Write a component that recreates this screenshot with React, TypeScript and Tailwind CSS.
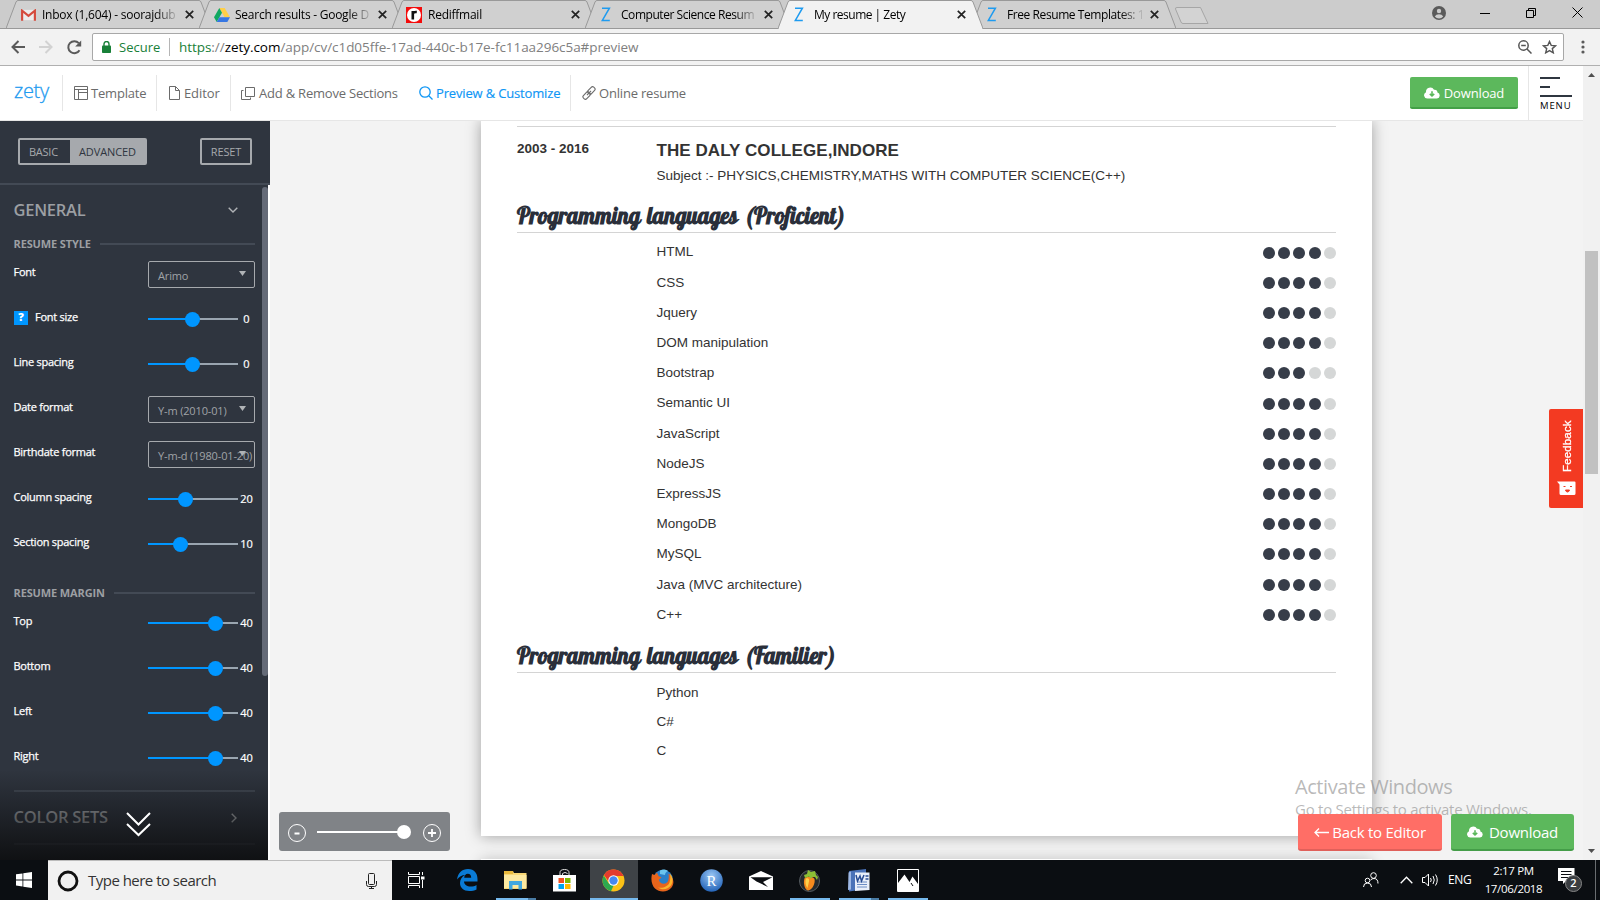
import React from "react";

const UI = "font-['Open_Sans','Noto_Sans',sans-serif]";

const ZIcon = () => (
  <svg width="10" height="15" viewBox="0 0 10 15" fill="none" stroke="#1e9bf0" strokeWidth="1.5" className="ml-px">
    <path d="M1 1.2h7.4L1.2 13.6h7.6" />
  </svg>
);
const GmailIcon = () => (
  <svg width="15" height="12" viewBox="0 0 16 12">
    <rect x="1" y="0.5" width="14" height="11" fill="#ececec" />
    <path d="M1.2 12V1.4L8 6.8l6.800-5.4V12" fill="none" stroke="#d54b3d" strokeWidth="2.300" />
  </svg>
);
const DriveIcon = () => (
  <svg width="16" height="14" viewBox="0 0 16 14">
    <path d="M5.300 0h5.400L16 9.300h-5.400z" fill="#ffcf48" />
    <path d="M5.300 0L8 4.700 2.700 14 0 9.300z" fill="#11a861" />
    <path d="M5.400 9.300H16L13.300 14H2.700z" fill="#3777e3" />
  </svg>
);
const RediffIcon = () => (
  <svg width="16" height="16" viewBox="0 0 16 16" className="-ml-px">
    <rect width="16" height="16" fill="#f40b0b" />
    <circle cx="8" cy="8" r="7" fill="#fff" />
    <path d="M6.800 12.500V4M6.800 7.500c0-2.200 1.500-2.700 4-2.500" fill="none" stroke="#111" strokeWidth="2.600" />
  </svg>
);

function Tab({ icon, title, track, active = false }: { icon: React.ReactNode; title: string; track: string; active?: boolean }) {
  const face = active ? "#f2f2f2" : "#d0d0d0";
  return (
    <div className={`relative h-[29px] w-[205px] -mr-[12px] shrink-0 ${active ? "z-10" : ""}`}>
      <svg className="absolute inset-0" width="205" height="29" viewBox="0 0 205 29">
        <path d="M0 28.500L10 2Q10.800 .5 12 .5H193Q194.200 .5 195 2L205 28.500" fill={face} stroke="#999" />
        {active ? <path d="M1 28.500H204" stroke="#f2f2f2" /> : <path d="M0 28.500H205" stroke="#999" />}
      </svg>
      <div className="relative flex h-[29px] items-center pl-[15px] pr-[17px]">
        <span className="flex w-[21px] shrink-0">{icon}</span>
        <span className={`h-[18px] w-[138px] whitespace-nowrap text-[12px] leading-[18px] text-black ${track} [mask-image:linear-gradient(to_right,black_82%,transparent_100%)]`}>
          {title}
        </span>
        <svg className="ml-auto" width="9" height="9" viewBox="0 0 9 9" stroke="#222" strokeWidth="1.700">
          <path d="M.8 .8l7.400 7.400M8.200 .8L.8 8.200" />
        </svg>
      </div>
    </div>
  );
}

function BrowserChrome() {
  return (
    <div className="shrink-0">
      <div className="flex h-[29px] border-b border-[#999] bg-[#ccc] pl-[6px]">
        <Tab icon={<GmailIcon />} title="Inbox (1,604) - soorajdub" track="tracking-[-0.23px]" />
        <Tab icon={<DriveIcon />} title="Search results - Google D" track="tracking-[-0.25px]" />
        <Tab icon={<RediffIcon />} title="Rediffmail" track="tracking-[-0.25px]" />
        <Tab icon={<ZIcon />} title="Computer Science Resum" track="tracking-[-0.45px]" />
        <Tab icon={<ZIcon />} title="My resume | Zety" track="tracking-[-0.5px]" active />
        <Tab icon={<ZIcon />} title="Free Resume Templates: 1" track="tracking-[-0.42px]" />
        <svg className="ml-[10px] mt-[6px]" width="36" height="19" viewBox="0 0 36 19">
          <path d="M3 1.500H26.500L34 17.500H9Q7.500 17.500 7 16L1.500 3Q1.200 1.500 3 1.500z" fill="#d3d3d3" stroke="#a6a6a6" />
        </svg>
        <div className="ml-auto flex items-center">
          <svg width="14" height="14" viewBox="0 0 14 14" className="-mt-[3px] mr-[34px]">
            <circle cx="7" cy="7" r="7" fill="#5a5a5a" />
            <circle cx="7" cy="5" r="2.200" fill="#ccc" />
            <path d="M2.800 10.500Q4 8.200 7 8.200T11.200 10.500Q9.500 12.500 7 12.500T2.800 10.500z" fill="#ccc" />
          </svg>
          <svg width="10" height="10" viewBox="0 0 10 10" stroke="#000" className="mr-[36px]"><path d="M0 4.500h10" /></svg>
          <svg width="10" height="10" viewBox="0 0 10 10" stroke="#000" fill="none" className="-mt-[3px] mr-[36px]">
            <path d="M.5 2.500h7v7h-7zM2.500 2V.5h7v7H8" />
          </svg>
          <svg width="11" height="11" viewBox="0 0 11 11" stroke="#000" className="-mt-[3px] mr-[17px]"><path d="M.5 .5l10 10M10.500 .5l-10 10" /></svg>
        </div>
      </div>
      <div className="flex h-[37px] items-center border-b border-[#b0b0b0] bg-[#f2f2f2] pl-[11px]">
        <svg width="14" height="14" viewBox="0 0 14 14" fill="none" stroke="#5a5a5a" strokeWidth="2"><path d="M14 7H1.500M7.500 1L1.500 7l6 6" /></svg>
        <svg className="ml-[14px]" width="14" height="14" viewBox="0 0 14 14" fill="none" stroke="#d2d2d2" strokeWidth="2"><path d="M0 7h12.500M6.500 1l6 6-6 6" /></svg>
        <svg className="ml-[14px]" width="15" height="15" viewBox="0 0 15 15" fill="none" stroke="#5a5a5a" strokeWidth="2">
          <path d="M12.500 10.200A6 6 0 1 1 11.800 3.200" />
          <path d="M14.200 .5v6h-6z" fill="#5a5a5a" stroke="none" />
        </svg>
        <div className="ml-[10px] flex h-[28px] w-[1472px] items-center rounded-[2px] border border-[#a8a8a8] bg-white text-[13px]">
          <svg className="ml-[9px]" width="9" height="12" viewBox="0 0 9 12">
            <rect y="4.500" width="9" height="7.500" rx="0.800" fill="#188038" />
            <path d="M2 5V3a2.500 2.500 0 0 1 5 0v2" fill="none" stroke="#188038" strokeWidth="1.400" />
          </svg>
          <span className="ml-[8px] mt-px w-[42px] whitespace-nowrap text-[13px] text-[#188038]">Secure</span>
          <span className="ml-[8px] h-[18px] w-px bg-[#b5b5b5]" />
          <span className="ml-[9px] mt-px whitespace-nowrap text-[13.500px] tracking-[-0.050px] text-[#808080]">
            <span className="text-[#188038]">https</span>://<span className="text-black">zety.com</span>/app/cv/c1d05ffe-17ad-440c-b17e-fc11aa296c5a#preview
          </span>
          <svg className="ml-auto" width="14" height="14" viewBox="0 0 14 14" fill="none" stroke="#555" strokeWidth="1.500">
            <circle cx="5.500" cy="5.500" r="4.700" />
            <path d="M9 9l4.500 4.500M3.200 5.500h4.600" />
          </svg>
          <svg className="ml-[10px] mr-[6px]" width="15" height="14" viewBox="0 0 15 14" fill="none" stroke="#555" strokeWidth="1.400">
            <path d="M7.500 1.500l1.700 3.900 4.300.4-3.200 2.800 1 4.200-3.800-2.200-3.800 2.200 1-4.200L1.500 5.800l4.300-.4z" />
          </svg>
        </div>
        <svg className="ml-[17px]" width="4" height="14" viewBox="0 0 4 14" fill="#5a5a5a">
          <circle cx="2" cy="2" r="1.600" /><circle cx="2" cy="7" r="1.600" /><circle cx="2" cy="12" r="1.600" />
        </svg>
      </div>
    </div>
  );
}

const CloudDown = ({ hole }: { hole: string }) => (
  <svg width="16" height="12" viewBox="0 0 16 12">
    <path d="M3.500 11.500A3.300 3.300 0 0 1 2 5.200 4.300 4.300 0 0 1 10 2.800a2.600 2.600 0 0 1 3.400 2.800A3 3 0 0 1 13 11.500z" fill="#fff" />
    <path d="M8 4.300v4.500M5.800 6.900L8 9l2.200-2.100" fill="none" stroke={hole} strokeWidth="1.600" />
  </svg>
);

const Sep = () => <span className="h-[36px] w-px shrink-0 bg-[#e6e6e6]" />;

function AppHeader() {
  return (
    <div className="flex h-[55px] shrink-0 items-center border-b border-[#e6e6e6] bg-white text-[13px] text-[#6b6b6b]">
      <span className="ml-[14px] w-[48px] -mt-[5px] text-[20px] font-light tracking-[-0.3px] text-[#1e9bf0] [-webkit-text-stroke:0.300px_#1e9bf0]">zety</span>
      <Sep />
      <div className="flex w-[93px] items-center pl-[11px]">
        <svg width="14" height="14" viewBox="0 0 14 14" fill="none" stroke="#6b6b6b"><path d="M.5 .5h13v13H.5zM.5 3.500h13M4.500 3.500v10M4.500 6.500h9" /></svg>
        <span className="ml-[3px] mt-[2px] tracking-[-0.2px]">Template</span>
      </div>
      <Sep />
      <div className="flex w-[73px] items-center pl-[12px]">
        <svg width="11" height="14" viewBox="0 0 11 14" fill="none" stroke="#6b6b6b"><path d="M.5 .5h6l4 4v9H.5zM6.500 .5v4h4" /></svg>
        <span className="ml-[4px] mt-[2px] tracking-[-0.1px]">Editor</span>
      </div>
      <Sep />
      <div className="flex w-[188px] items-center pl-[10px]">
        <svg width="14" height="13" viewBox="0 0 14 13" fill="none" stroke="#6b6b6b"><path d="M4.500 .5h9v9h-9zM2.500 3.500h-2v9h9v-2" /></svg>
        <span className="ml-[4px] mt-[2px] whitespace-nowrap tracking-[-0.210px]">Add &amp; Remove Sections</span>
      </div>
      <div className="flex w-[151px] items-center text-[#0e96f5]">
        <svg width="14" height="14" viewBox="0 0 14 14" fill="none" stroke="#0e96f5" strokeWidth="1.300"><circle cx="6" cy="6" r="5.200" /><path d="M10 10l3.500 3.500" /></svg>
        <span className="ml-[3px] mt-[2px] whitespace-nowrap tracking-[-0.160px] [-webkit-text-stroke:0.150px_#0e96f5]">Preview &amp; Customize</span>
      </div>
      <Sep />
      <div className="flex items-center pl-[11px]">
        <svg width="14" height="14" viewBox="0 0 14 14" fill="none" stroke="#6b6b6b" strokeWidth="1.100">
          <g transform="rotate(-47 7 7)"><rect x="-0.500" y="4.700" width="8" height="4.600" rx="1.800" /><rect x="6.500" y="4.700" width="8" height="4.600" rx="1.800" /><path d="M4 7h6" /></g>
        </svg>
        <span className="ml-[3px] mt-[2px] whitespace-nowrap tracking-[-0.190px]">Online resume</span>
      </div>
      <div className="ml-auto flex h-[32px] w-[108px] items-center justify-center rounded-[2px] border-b-2 border-[#43a047] bg-[#5cb85c] pt-[2px] text-white">
        <CloudDown hole="#5cb85c" />
        <span className="ml-[4px] mt-px tracking-[-0.150px]">Download</span>
      </div>
      <div className="ml-[10px] flex h-full w-[55px] flex-col border-l border-[#e6e6e6] pl-[11px] pt-[11px]">
        <span className="h-[2px] w-[20px] bg-[#2f3640]" />
        <span className="mt-[7px] h-[2px] w-[10px] bg-[#2f3640]" />
        <span className="mt-[7px] h-[2px] w-[32px] bg-[#2f3640]" />
        <span className="mt-[3px] text-[9.500px] leading-[12px] tracking-[0.900px] text-black">MENU</span>
      </div>
    </div>
  );
}

function Slider({ pct, value }: { pct: number; value: number }) {
  return (
    <div className="ml-auto flex w-[107px] items-center pt-[2px]">
      <div className="relative h-[2px] w-[90px] bg-[#9aa5b0]">
        <div className="h-full bg-[#0096ff]" style={{ width: pct }} />
        <div className="absolute top-[-6px] size-[15px] rounded-full bg-[#0096ff]" style={{ left: pct - 7.5 }} />
      </div>
      <span className="w-[17px] text-center text-[11px] leading-[14px] text-white [-webkit-text-stroke:0.200px_white]">{value}</span>
    </div>
  );
}

function Select({ value }: { value: string }) {
  return (
    <div className="relative ml-auto mt-[3px] flex h-[27px] w-[107px] items-center rounded-[2px] border border-[#a6a9ad] pl-[9px] pt-[4px] text-[11px] tracking-[-0.150px] text-[#a0a3a7]">
      <span className="whitespace-nowrap">{value}</span>
      <svg className="absolute right-[8px] top-[9px]" width="7" height="5" viewBox="0 0 7 5" fill="#b0b3b6"><path d="M0 0h7L3.500 5z" /></svg>
    </div>
  );
}

function Row({ label, help = false, children }: { label: string; help?: boolean; children: React.ReactNode }) {
  return (
    <div className="flex h-[45px] items-center pr-[13px]">
      {help && <span className="ml-[0.500px] mr-[7px] flex size-[14px] items-center justify-center bg-[#0096ff] text-[11px] font-extrabold text-white">?</span>}
      <span className="text-[11px] tracking-[-0.260px] text-white [-webkit-text-stroke:0.250px_white]">{label}</span>
      {children}
    </div>
  );
}

function SubHead({ text }: { text: string }) {
  return (
    <div className="flex h-[16px] items-center pr-[13px] text-[11px] font-bold text-[#9c9fa3]">
      <span className="whitespace-nowrap tracking-[-0.120px]">{text}</span>
      <span className="ml-[9px] h-[2px] grow bg-[#434a55]" />
    </div>
  );
}

function Sidebar() {
  return (
    <div className="flex w-[270px] shrink-0 flex-col">
      <div className="flex h-[64px] shrink-0 items-start border-b-2 border-[#434a55] bg-[#2f353f] pl-[18px] pr-[18px] pt-[17px] text-[11px] text-[#a6a9ad]">
        <div className="flex h-[27px] w-[129px] rounded-[2px] border-2 border-[#a6a9ad]">
          <span className="flex w-[50px] items-center pl-[9px] pt-px tracking-[-0.250px]">BASIC</span>
          <span className="flex grow items-center justify-center bg-[#a6a9ad] pt-px tracking-[-0.1px] text-[#2f353f]">ADVANCED</span>
        </div>
        <div className="ml-auto flex h-[27px] w-[52px] items-center justify-center rounded-[2px] border-2 border-[#a6a9ad] pt-px tracking-[-0.1px]">RESET</div>
      </div>
      <div className="relative flex h-[675px] w-[268px] flex-col overflow-hidden bg-[#2f353f] pl-[13.500px]">
        <div className="flex h-[51px] items-center justify-between pr-[30px]">
          <span className="text-[16.500px] font-semibold tracking-[-0.250px] text-[#9c9fa3]">GENERAL</span>
          <svg width="10" height="6" viewBox="0 0 10 6" fill="none" stroke="#b0b3b6" strokeWidth="1.400" className="-mt-[2px]"><path d="M.7 .7L5 5 9.300 .7" /></svg>
        </div>
        <SubHead text="RESUME STYLE" />
        <div className="-mt-[2px]">
          <Row label="Font"><Select value="Arimo" /></Row>
          <Row label="Font size" help><Slider pct={44.5} value={0} /></Row>
          <Row label="Line spacing"><Slider pct={44.5} value={0} /></Row>
          <Row label="Date format"><Select value="Y-m (2010-01)" /></Row>
          <Row label="Birthdate format"><Select value="Y-m-d (1980-01-20)" /></Row>
          <Row label="Column spacing"><Slider pct={37} value={20} /></Row>
          <Row label="Section spacing"><Slider pct={32} value={10} /></Row>
        </div>
        <div className="mt-[20px]"><SubHead text="RESUME MARGIN" /></div>
        <div className="-mt-[2px]">
          <Row label="Top"><Slider pct={67.5} value={40} /></Row>
          <Row label="Bottom"><Slider pct={67.5} value={40} /></Row>
          <Row label="Left"><Slider pct={67.5} value={40} /></Row>
          <Row label="Right"><Slider pct={67.5} value={40} /></Row>
        </div>
        <div className="mr-[13px] mt-[11px] flex h-[55px] shrink-0 items-center justify-between border-y-2 border-[#434a55] pr-[18px]">
          <span className="-mt-px text-[16.500px] font-semibold tracking-[-0.250px] text-[#a6a9ad]">COLOR SETS</span>
          <svg width="6" height="10" viewBox="0 0 6 10" fill="none" stroke="#b0b3b6" strokeWidth="1.400"><path d="M.7 .7L5 5 .7 9.300" /></svg>
        </div>
        <div className="absolute right-0 top-[2px] h-[489px] w-[6px] rounded-full bg-[#656b78]" />
        <div className="absolute bottom-0 left-0 h-[90px] w-full bg-linear-to-b from-[#0e0f11]/0 to-[#0e0f11]/95" />
        <svg className="absolute left-[126px] top-[627px]" width="25" height="25" viewBox="0 0 25 25" fill="none" stroke="#fff" strokeWidth="2">
          <path d="M1 1l11.500 11.500L24 1M1 12l11.500 11L24 12" />
        </svg>
      </div>
    </div>
  );
}

const skills: [string, number][] = [
  ["HTML", 4], ["CSS", 4], ["Jquery", 4], ["DOM manipulation", 4], ["Bootstrap", 3], ["Semantic UI", 4], ["JavaScript", 4],
  ["NodeJS", 4], ["ExpressJS", 4], ["MongoDB", 4], ["MySQL", 4], ["Java (MVC architecture)", 4], ["C++", 4],
];

function SectionTitle({ children }: { children: string }) {
  return (
    <div className="h-[31px] whitespace-nowrap border-b border-[#d4d4d4] font-['Lobster','Liberation_Serif',serif] text-[22.500px] font-bold leading-[28px] tracking-[-0.200px] text-[#2a2f3a] [word-spacing:2px]">
      {children}
    </div>
  );
}

function Resume() {
  return (
    <div className="h-[715px] w-[891px] shrink-0 bg-white pl-[36px] pr-[36px] pt-[5px] font-['Liberation_Sans',Arial,sans-serif] text-[13.500px] text-[#333] shadow-[0_0_14px_rgba(0,0,0,0.350)]">
      <div className="h-px bg-[#d4d4d4]" />
      <div className="flex h-[75px]">
        <div className="w-[139.500px] pt-[12px] font-bold leading-[20px]">2003 - 2016</div>
        <div>
          <div className="pt-[13px] text-[17px] font-bold leading-[22px] tracking-[0.070px]">THE DALY COLLEGE,INDORE</div>
          <div className="pt-[4px] leading-[20px]">Subject :- PHYSICS,CHEMISTRY,MATHS WITH COMPUTER SCIENCE(C++)</div>
        </div>
      </div>
      <SectionTitle>Programming languages (Proficient)</SectionTitle>
      <div className="pb-[8.500px] pt-[4.500px]">
        {skills.map(([name, n]) => (
          <div key={name} className="flex h-[30.200px] items-center justify-between pl-[139.500px]">
            <span>{name}</span>
            <div className="flex gap-[3.300px]">
              {[0, 1, 2, 3, 4].map((i) => (
                <span key={i} className={`size-[12px] rounded-full ${i < n ? "bg-[#373d49]" : "bg-[#d5d7d7]"}`} />
              ))}
            </div>
          </div>
        ))}
      </div>
      <div className="mt-[4px]"><SectionTitle>Programming languages (Familier)</SectionTitle></div>
      <div className="pl-[139.500px] pt-[5px]">
        {["Python", "C#", "C"].map((n) => (
          <div key={n} className="flex h-[29px] items-center">{n}</div>
        ))}
      </div>
    </div>
  );
}

function Page() {
  return (
    <div className="relative flex h-[739px] w-[1313px] flex-col overflow-hidden bg-[#f3f3f3] pl-[211px]">
      <Resume />
      <div className="mt-[23px] h-[20px] w-[891px] shrink-0 bg-white shadow-[0_0_14px_rgba(0,0,0,0.200)]" />
      <div className="absolute left-[9px] top-[691px] flex h-[39px] w-[171px] items-center rounded-[3px] bg-[#808387] pl-[9px]">
        <svg width="18" height="18" viewBox="0 0 18 18" fill="none" stroke="#fff" className="mt-[2px]"><circle cx="9" cy="9" r="8.500" /><path d="M6.500 9.500h5" strokeWidth="2" /></svg>
        <span className="relative ml-[11px] h-[2px] w-[87px] bg-white"><span className="absolute -right-[7px] -top-[6px] size-[14px] rounded-full bg-white" /></span>
        <svg width="18" height="18" viewBox="0 0 18 18" fill="none" stroke="#fff" className="ml-[19px] mt-[2px]"><circle cx="9" cy="9" r="8.500" /><path d="M5 9h8M9 5v8" strokeWidth="1.800" /></svg>
      </div>
      <div className="absolute left-[1025px] top-[652px] whitespace-nowrap text-[#8a8a8a]/60">
        <div className="text-[20px] leading-[28px] tracking-[-0.430px]">Activate Windows</div>
        <div className="-mt-[2px] text-[15px] leading-[20px] tracking-[-0.260px]">Go to Settings to activate Windows.</div>
      </div>
      <div className="absolute left-[1028px] top-[693px] flex gap-[9px] text-[15px] text-white">
        <div className="flex h-[37px] w-[144px] items-center justify-center rounded-[3px] border-b-2 border-[#e0605a] bg-[#ff6e66]">
          <svg width="15" height="9" viewBox="0 0 15 9" fill="none" stroke="#fff" strokeWidth="1.300" className="mt-[2px]"><path d="M15 4.500H1M5 .5l-4 4 4 4" /></svg>
          <span className="ml-[3px] mt-[2px] whitespace-nowrap tracking-[-0.250px]">Back to Editor</span>
        </div>
        <div className="flex h-[37px] w-[123px] items-center justify-center rounded-[3px] border-b-2 border-[#449d48] bg-[#5cb85c]">
          <CloudDown hole="#5cb85c" />
          <span className="ml-[6px] mt-[2px] tracking-[-0.250px]">Download</span>
        </div>
      </div>
      <div className="absolute right-0 top-[288px] flex h-[99px] w-[34px] flex-col items-center rounded-l-[2px] bg-[#f33a22] pt-[10px] text-white">
        <span className="ml-px h-[53px] rotate-180 whitespace-nowrap font-['Liberation_Sans',Arial,sans-serif] text-[11.500px] leading-[16px] tracking-[0.150px] [writing-mode:vertical-rl] [-webkit-text-stroke:0.300px_white]">Feedback</span>
        <svg className="mt-[9px]" width="19" height="15" viewBox="0 0 19 15">
          <path d="M0 .5h17.500Q18.500 .5 18.500 1.500V12.500Q18.500 14 17 14H4Q2.500 14 2.500 12.500V3.500z" fill="#fff" />
          <path d="M6.500 5.500h2M13 5.500h2M8.500 9h4Q12 11 10.500 11T8.500 9z" stroke="#f33a22" fill="#f33a22" strokeWidth="1" />
        </svg>
      </div>
    </div>
  );
}

function Scrollbar() {
  return (
    <div className="flex w-[17px] flex-col items-center bg-[#f1f1f1] pt-[7px]">
      <svg width="7" height="4" viewBox="0 0 7 4" fill="#505050"><path d="M0 4h7L3.500 0z" /></svg>
      <div className="mt-[174px] h-[223px] w-[13px] bg-[#c1c1c1]" />
      <svg className="mt-[375px]" width="7" height="4" viewBox="0 0 7 4" fill="#505050"><path d="M0 0h7L3.500 4z" /></svg>
    </div>
  );
}

function Task({ children, line = "", active = false }: { children: React.ReactNode; line?: string; active?: boolean }) {
  return (
    <div className={`relative mr-px flex h-[40px] w-[48px] shrink-0 items-center justify-center ${active ? "bg-[#3f4347]" : ""}`}>
      {children}
      {line && (
        <div className={`absolute bottom-0 flex h-[2px] ${active ? "w-[48px]" : "w-[40px]"} bg-[#76b9ed]`}>
          {line === "split" && <span className="ml-auto w-[8px] bg-[#4a7ca5]" />}
        </div>
      )}
    </div>
  );
}

function Taskbar() {
  return (
    <div className="flex h-[40px] shrink-0 items-center bg-[#0b0e12] text-white">
      <div className="flex h-full w-[48px] items-center justify-center">
        <svg width="16" height="16" viewBox="0 0 16 16" fill="#fff"><path d="M0 2.300L6.500 1.400V7.500H0zM7.300 1.300L16 0v7.500H7.300zM0 8.400h6.500v6.100L0 13.600zM7.300 8.400H16V16l-8.700-1.200z" /></svg>
      </div>
      <div className="flex h-full w-[344px] items-center border-t border-[#bbb] bg-[#f1f1f1] pl-[9px]">
        <svg width="22" height="22" viewBox="0 0 22 22" fill="none" stroke="#111" strokeWidth="2.800"><circle cx="11" cy="11" r="9" /></svg>
        <span className="ml-[9px] whitespace-nowrap text-[15px] tracking-[-0.520px] text-[#333]">Type here to search</span>
        <svg className="ml-auto mr-[15px]" width="11" height="16" viewBox="0 0 11 16" fill="none" stroke="#222"><rect x="2.500" y=".5" width="6" height="11" rx="1" /><path d="M.5 8v3.500q0 2 2 2h6q2 0 2-2V8M5.500 13.500v2M3 15.500h5" /></svg>
      </div>
      <div className="flex pl-[1.500px]">
        <Task>
          <svg width="17" height="16" viewBox="0 0 17 16" fill="none" stroke="#fff" className="-ml-[3px]"><path d="M.5 0v2.500h11V0M.5 16v-2.500h11V16M.5 4.500h11v7H.5zM14.500 0v3M14.500 8v8" /><path d="M13 4.500h3.500v3H13z" fill="#fff" stroke="none" /></svg>
        </Task>
        <Task>
          <svg width="21" height="22" viewBox="0 0 21 22" className="ml-px"><path d="M0 10.500C1 4 5 0 11 0c6.500 0 9.500 4.500 9.500 10v2.500H7c.3 3.500 3 5 6.500 5 2.500 0 4.500-.7 6-1.600v4.600c-2 1-4.500 1.500-7.200 1.500C6.500 22 3 18.700 3 14c0-3.700 2-6.700 5.200-8.100C5 6 2 7.700 0 10.500zM7.200 8.800h7c0-2.500-1.200-4-3.400-4s-3.400 1.700-3.600 4z" fill="#0a7bd6" fillRule="evenodd" /></svg>
        </Task>
        <Task line="split">
          <svg width="23" height="20" viewBox="0 0 23 20"><path d="M0 1h9l1 2h12.500v16H0z" fill="#f8d775" /><path d="M0 1h9v3H0z" fill="#e9b93c" /><path d="M0 5h22.500v13H0z" fill="#fde9a0" /><path d="M5 19.500V11h13v8.500h-3.500V15h-6v4.500z" fill="#42a8e0" /></svg>
        </Task>
        <Task>
          <svg width="23" height="23" viewBox="0 0 23 23"><path d="M7 6V3.500a4.500 3 0 0 1 9 0V6M9.500 6V4.500a3.500 3 0 0 1 5 0" fill="none" stroke="#ddd" /><path d="M0 6h23v16.500H0z" fill="#fff" /><path d="M5.500 9h5.500v5H5.500z" fill="#f25022" /><path d="M12 9h5.500v5H12z" fill="#7fba00" /><path d="M5.500 15H11v5H5.500z" fill="#00a4ef" /><path d="M12 15h5.500v5H12z" fill="#ffb900" /></svg>
        </Task>
        <Task active line="full">
          <svg width="23" height="23" viewBox="0 0 23 23"><circle cx="11.500" cy="11.500" r="11" fill="#fbc116" /><path d="M2 6A11 11 0 0 1 21.500 7H11.500L7 13z" fill="#e33b2e" /><path d="M1.800 6.500l5 8 5 1.500-2.800 6.300A11 11 0 0 1 1.800 6.500z" fill="#2da94f" /><circle cx="11.500" cy="11.500" r="5.200" fill="#fff" /><circle cx="11.500" cy="11.500" r="4.200" fill="#4688f1" /></svg>
        </Task>
        <Task>
          <svg width="23" height="23" viewBox="0 0 23 23"><circle cx="12" cy="10.500" r="9.800" fill="#2a7fc9" /><path d="M9 1.500c3-1.500 6-1 8 .5-2 1-3 2-3 4l-5-1z" fill="#6bc4ee" /><path d="M1 5l2.500 1L6 3.500 7.500 7l3 1.500-2.500 2c0 4 5 5.500 8 3 2-2 2-6 1.500-9 5 3.500 6.500 9.500 3 14-4 5-12 5-16.500 1C1 16.500-.5 11 1 5z" fill="#e8641b" /><path d="M19 4.500c3 4 3.500 8 1 12-3 4-9 5-13 2 5 1 10-1 11.500-5 1-3 1-6 .5-9z" fill="#fbb42b" /></svg>
        </Task>
        <Task>
          <svg width="23" height="23" viewBox="0 0 23 23"><defs><radialGradient id="rs" cx=".5" cy=".3" r=".7"><stop offset="0" stopColor="#9bc8f5" /><stop offset="1" stopColor="#2363b8" /></radialGradient></defs><circle cx="11.500" cy="11.500" r="11.300" fill="url(#rs)" /><text x="11.500" y="16.500" textAnchor="middle" fontFamily="Liberation Serif" fontSize="15" fill="#fff">R</text></svg>
        </Task>
        <Task>
          <svg width="24" height="19" viewBox="0 0 24 19" className="mt-px"><path d="M12 0l12 5.500V19H0V5.500z" fill="#fff" /><path d="M1.500 6.200H23.500L14 11l5 5L7.500 10.500z" fill="#0b0e12" /></svg>
        </Task>
        <Task line="full">
          <svg width="21" height="23" viewBox="0 0 21 23"><ellipse cx="10.500" cy="12" rx="10" ry="10.500" fill="#25292d" stroke="#565b60" /><path d="M5.500 9.500C7 7 14 7 15.500 10c1 4-2 11-6.500 11.500C5.500 21 4 13 5.500 9.500z" fill="#f68a1e" /><path d="M7 9.500c2-1 3.500 0 3 3L8.500 19C6.500 17 6 12 7 9.500z" fill="#ffd04a" /><path d="M5 6l3-1 1-4 3 2 4-1 1 4 2 2-1 3-2-3-3 0-1 2-2-2.500-4 1.500z" fill="#8cbf35" /></svg>
        </Task>
        <Task line="split">
          <svg width="23" height="23" viewBox="0 0 23 23"><path d="M2 2L19 0v20L2 22.500z" fill="#4a72b8" /><path d="M8 3.500h14.500v17.500L8 22z" fill="#e9effa" /><path d="M10 13h10M10 15.500h10M10 18h10" stroke="#6b8cc4" /><path d="M1.500 3.500L4 2.500v18L1 21z" fill="#9db7e4" /><path d="M9 6l1.500 6 2.500-5 1.500 5L17 6M18.500 7h3M18.500 10h3" fill="none" stroke="#284c93" strokeWidth="1.500" /></svg>
        </Task>
        <Task line="full">
          <svg width="22" height="23" viewBox="0 0 22 23"><path d="M.5 .5h21v22H.5z" fill="#0b0e12" stroke="#fff" /><path d="M1 14L7.500 5.500l5 7.500 3-5.500L21 15v7H1z" fill="#fff" /><path d="M14 14l2 3" stroke="#0b0e12" /></svg>
        </Task>
      </div>
      <div className="ml-auto flex h-full items-center text-[12px]">
        <svg width="16" height="16" viewBox="0 0 16 16" fill="none" stroke="#fff" className="mr-[21px]"><circle cx="10.500" cy="3.500" r="2.800" /><circle cx="4.500" cy="8.500" r="2.300" /><path d="M.5 15q0-4 4-4t4 4M7.500 8Q9 6.500 11 6.500q4 0 4 5" /></svg>
        <svg width="13" height="8" viewBox="0 0 13 8" fill="none" stroke="#fff" strokeWidth="1.300" className="mr-[9px]"><path d="M.7 7.200L6.500 1.200l5.800 6" /></svg>
        <svg width="17" height="14" viewBox="0 0 17 14" fill="none" stroke="#fff" className="mr-[9px]"><path d="M.5 4.500h2.500L6.500 1v12L3 9.500H.5zM8.500 5q1.500 2 0 4M11 3q2.500 4 0 8M13.500 1.500q3.500 5.500 0 11" /></svg>
        <span className="w-[24px] tracking-[-0.400px]">ENG</span>
        <div className="ml-[11px] flex w-[61px] flex-col items-center whitespace-nowrap text-[11.500px] leading-[18px] tracking-[-0.330px]">
          <span>2:17 PM</span>
          <span>17/06/2018</span>
        </div>
        <div className="relative ml-[14px] h-[24px] w-[25px]">
          <svg width="17" height="17" viewBox="0 0 17 17"><path d="M0 0h16.500v13H8l-3 3v-3H0z" fill="#fff" /><path d="M3 3.500h10.500M3 6.500h10.500M3 9.500h7" stroke="#0b0e12" /></svg>
          <span className="absolute left-[7px] top-[7px] flex size-[17px] items-center justify-center rounded-full border border-[#888] bg-[#3a3d41] text-[11px] font-semibold">2</span>
        </div>
        <span className="ml-[12px] mr-[4px] h-full w-px bg-[#6a6d70]" />
      </div>
    </div>
  );
}

export default function App() {
  return (
    <div className={`flex h-[900px] w-[1600px] flex-col overflow-hidden bg-white ${UI}`}>
      <BrowserChrome />
      <div className="flex h-[794px] shrink-0">
        <div className="flex w-[1583px] flex-col">
          <AppHeader />
          <div className="flex h-[739px]">
            <Sidebar />
            <Page />
          </div>
        </div>
        <Scrollbar />
      </div>
      <Taskbar />
    </div>
  );
}
